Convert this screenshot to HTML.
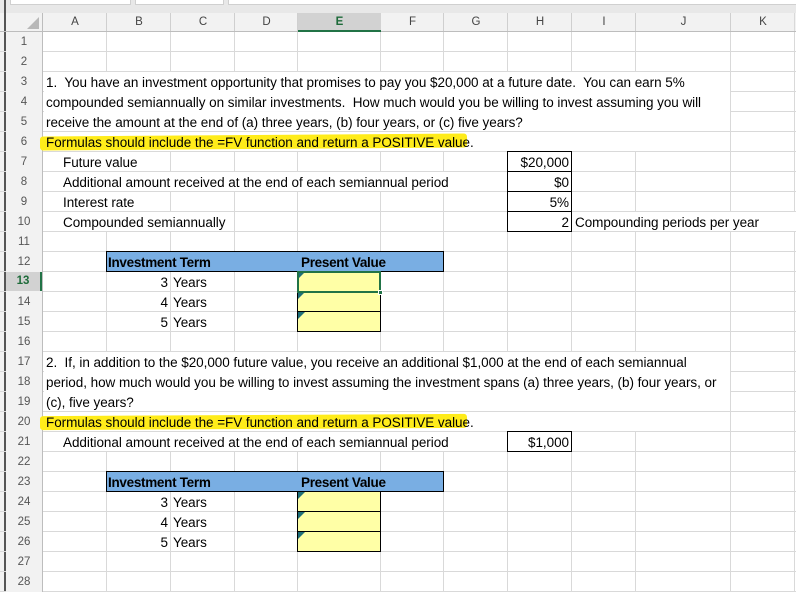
<!DOCTYPE html>
<html><head><meta charset="utf-8"><style>
*{margin:0;padding:0;box-sizing:border-box}
body{width:796px;height:592px;overflow:hidden;background:#fff;position:relative;font-family:"Liberation Sans",Arial,sans-serif;color:#000}
.a{position:absolute}
.t{position:absolute;font-size:13.5px;letter-spacing:-0.05px;white-space:nowrap;line-height:20px;padding-top:1px}
.rh{position:absolute;left:6px;width:36px;text-align:center;font-size:11.5px;color:#555;line-height:20px}
.ch{position:absolute;top:13px;height:19px;text-align:center;font-size:11.5px;color:#444;line-height:19px}
.w{position:absolute;background:#fff}
.y{position:absolute;background:#ffffa6;border:1px solid #000}
.y::before{content:"";position:absolute;left:0;top:0;border-top:7px solid #1f6f78;border-right:7px solid transparent}
.hl{position:absolute;background:#ffec1a;border-radius:3px}
.b{font-weight:bold;letter-spacing:-0.3px}
</style></head><body>
<div class="a" style="left:0;top:0;width:796px;height:13px;background:#e8e8e8"></div>
<div class="a" style="left:10px;top:-1px;width:121px;height:6px;background:#fff;border:1px solid #d0d0d0"></div>
<div class="a" style="left:135px;top:-1px;width:89px;height:6px;background:#fff;border:1px solid #d0d0d0"></div>
<div class="a" style="left:228px;top:-1px;width:570px;height:6px;background:#fff;border:1px solid #d0d0d0"></div>
<div class="a" style="left:0;top:13px;width:796px;height:19px;background:#f2f2f2;border-bottom:1px solid #bdbdbd"></div>
<div class="a" style="left:0;top:13px;width:43px;height:579px;background:#f2f2f2;border-right:1px solid #bdbdbd"></div>
<div class="a" style="left:4px;top:0;width:2px;height:592px;background:#555"></div>
<svg class="a" style="left:26px;top:17px" width="14" height="13"><polygon points="13,0 13,12 1,12" fill="#b8b8b8"/></svg>
<svg class="a" style="left:0;top:0" width="796" height="592">
<g stroke="#d9d9d9" stroke-width="1">
<line x1="106.5" y1="13" x2="106.5" y2="592"/><line x1="170.5" y1="13" x2="170.5" y2="592"/><line x1="234.5" y1="13" x2="234.5" y2="592"/><line x1="297.5" y1="13" x2="297.5" y2="592"/><line x1="380.5" y1="13" x2="380.5" y2="592"/><line x1="443.5" y1="13" x2="443.5" y2="592"/><line x1="507.5" y1="13" x2="507.5" y2="592"/><line x1="571.5" y1="13" x2="571.5" y2="592"/><line x1="635.5" y1="13" x2="635.5" y2="592"/><line x1="730.5" y1="13" x2="730.5" y2="592"/><line x1="794.5" y1="13" x2="794.5" y2="592"/>
</g>
<g stroke="#d9d9d9">
<line x1="0" y1="51.5" x2="796" y2="51.5"/><line x1="0" y1="71.5" x2="796" y2="71.5"/><line x1="0" y1="91.5" x2="796" y2="91.5"/><line x1="0" y1="111.5" x2="796" y2="111.5"/><line x1="0" y1="131.5" x2="796" y2="131.5"/><line x1="0" y1="151.5" x2="796" y2="151.5"/><line x1="0" y1="171.5" x2="796" y2="171.5"/><line x1="0" y1="191.5" x2="796" y2="191.5"/><line x1="0" y1="211.5" x2="796" y2="211.5"/><line x1="0" y1="231.5" x2="796" y2="231.5"/><line x1="0" y1="251.5" x2="796" y2="251.5"/><line x1="0" y1="271.5" x2="796" y2="271.5"/><line x1="0" y1="291.5" x2="796" y2="291.5"/><line x1="0" y1="311.5" x2="796" y2="311.5"/><line x1="0" y1="331.5" x2="796" y2="331.5"/><line x1="0" y1="351.5" x2="796" y2="351.5"/><line x1="0" y1="371.5" x2="796" y2="371.5"/><line x1="0" y1="391.5" x2="796" y2="391.5"/><line x1="0" y1="411.5" x2="796" y2="411.5"/><line x1="0" y1="431.5" x2="796" y2="431.5"/><line x1="0" y1="451.5" x2="796" y2="451.5"/><line x1="0" y1="471.5" x2="796" y2="471.5"/><line x1="0" y1="491.5" x2="796" y2="491.5"/><line x1="0" y1="511.5" x2="796" y2="511.5"/><line x1="0" y1="531.5" x2="796" y2="531.5"/><line x1="0" y1="551.5" x2="796" y2="551.5"/><line x1="0" y1="571.5" x2="796" y2="571.5"/><line x1="0" y1="591.5" x2="796" y2="591.5"/>
</g>
<g stroke="#cfcfcf"><line x1="106.5" y1="13" x2="106.5" y2="31"/><line x1="170.5" y1="13" x2="170.5" y2="31"/><line x1="234.5" y1="13" x2="234.5" y2="31"/><line x1="297.5" y1="13" x2="297.5" y2="31"/><line x1="380.5" y1="13" x2="380.5" y2="31"/><line x1="443.5" y1="13" x2="443.5" y2="31"/><line x1="507.5" y1="13" x2="507.5" y2="31"/><line x1="571.5" y1="13" x2="571.5" y2="31"/><line x1="635.5" y1="13" x2="635.5" y2="31"/><line x1="730.5" y1="13" x2="730.5" y2="31"/></g>
</svg>
<div class="a" style="left:6px;top:32px;width:36px;height:560px;background:#f2f2f2"></div>
<div class="a" style="left:42px;top:32px;width:1px;height:560px;background:#bdbdbd"></div>
<div class="a" style="left:0;top:31px;width:796px;height:1px;background:#bdbdbd"></div>
<div class="ch" style="left:43px;width:64px">A</div><div class="ch" style="left:107px;width:64px">B</div><div class="ch" style="left:171px;width:64px">C</div><div class="ch" style="left:235px;width:63px">D</div>
<div class="ch" style="left:298px;width:83px;background:#d2d2d2;font-weight:bold;color:#1e6b3a;border-bottom:2px solid #217346">E</div>
<div class="ch" style="left:381px;width:63px">F</div><div class="ch" style="left:444px;width:64px">G</div><div class="ch" style="left:508px;width:64px">H</div><div class="ch" style="left:572px;width:64px">I</div><div class="ch" style="left:636px;width:95px">J</div><div class="ch" style="left:731px;width:64px">K</div>
<div class="rh" style="top:32px">1</div><div class="rh" style="top:52px">2</div><div class="rh" style="top:72px">3</div><div class="rh" style="top:92px">4</div><div class="rh" style="top:112px">5</div><div class="rh" style="top:132px">6</div><div class="rh" style="top:152px">7</div><div class="rh" style="top:172px">8</div><div class="rh" style="top:192px">9</div><div class="rh" style="top:212px">10</div><div class="rh" style="top:232px">11</div><div class="rh" style="top:252px">12</div>
<div class="rh" style="top:272px;background:#d2d2d2;color:#1e6b3a;font-weight:bold;border-right:2px solid #217346;height:19px;line-height:19px">13</div>
<div class="rh" style="top:292px">14</div><div class="rh" style="top:312px">15</div><div class="rh" style="top:332px">16</div><div class="rh" style="top:352px">17</div><div class="rh" style="top:372px">18</div><div class="rh" style="top:392px">19</div><div class="rh" style="top:412px">20</div><div class="rh" style="top:432px">21</div><div class="rh" style="top:452px">22</div><div class="rh" style="top:472px">23</div><div class="rh" style="top:492px">24</div><div class="rh" style="top:512px">25</div><div class="rh" style="top:532px">26</div><div class="rh" style="top:552px">27</div><div class="rh" style="top:572px">28</div>
<div class="w" style="left:44px;top:72px;width:686px;height:59px"></div>
<div class="w" style="left:44px;top:132px;width:686px;height:19px"></div>
<div class="w" style="left:44px;top:152px;width:126px;height:19px"></div>
<div class="w" style="left:44px;top:172px;width:463px;height:19px"></div>
<div class="w" style="left:44px;top:192px;width:126px;height:19px"></div>
<div class="w" style="left:44px;top:212px;width:190px;height:19px"></div>
<div class="w" style="left:573px;top:212px;width:222px;height:19px"></div>
<div class="w" style="left:44px;top:352px;width:686px;height:59px"></div>
<div class="w" style="left:44px;top:412px;width:686px;height:19px"></div>
<div class="w" style="left:44px;top:432px;width:463px;height:19px"></div>
<div class="hl" style="left:40px;top:135px;width:427px;height:14px;transform:rotate(-0.4deg)"></div>
<div class="hl" style="left:40px;top:415px;width:427px;height:14px;transform:rotate(-0.3deg)"></div>
<div class="t" style="left:46px;top:72px">1.&nbsp; You have an investment opportunity that promises to pay you $20,000 at a future date.&nbsp; You can earn 5%</div>
<div class="t" style="left:46px;top:92px">compounded semiannually on similar investments.&nbsp; How much would you be willing to invest assuming you will</div>
<div class="t" style="left:46px;top:112px">receive the amount at the end of (a) three years, (b) four years, or (c) five years?</div>
<div class="t" style="left:46px;top:132px">Formulas should include the =FV function and return a POSITIVE value.</div>
<div class="t" style="left:63px;top:152px">Future value</div>
<div class="t" style="left:63px;top:172px">Additional amount received at the end of each semiannual period</div>
<div class="t" style="left:63px;top:192px">Interest rate</div>
<div class="t" style="left:63px;top:212px">Compounded semiannually</div>
<div class="a" style="left:507px;top:151px;width:65px;height:81px;border:1px solid #000;background:#fff"></div>
<div class="a" style="left:507px;top:171px;width:65px;height:1px;background:#000"></div>
<div class="a" style="left:507px;top:191px;width:65px;height:1px;background:#000"></div>
<div class="a" style="left:507px;top:211px;width:65px;height:1px;background:#000"></div>
<div class="t" style="left:508px;top:152px;width:61px;text-align:right">$20,000</div>
<div class="t" style="left:508px;top:172px;width:61px;text-align:right">$0</div>
<div class="t" style="left:508px;top:192px;width:61px;text-align:right">5%</div>
<div class="t" style="left:508px;top:212px;width:61px;text-align:right">2</div>
<div class="t" style="left:575px;top:212px">Compounding periods per year</div>
<div class="a" style="left:106px;top:251px;width:338px;height:21px;background:#79aee3;border:1px solid #000"></div>
<div class="t b" style="left:108px;top:252px">Investment Term</div>
<div class="t b" style="left:301px;top:252px">Present Value</div>
<div class="t" style="left:107px;top:272px;width:61px;text-align:right">3</div><div class="t" style="left:173px;top:272px">Years</div>
<div class="t" style="left:107px;top:292px;width:61px;text-align:right">4</div><div class="t" style="left:173px;top:292px">Years</div>
<div class="t" style="left:107px;top:312px;width:61px;text-align:right">5</div><div class="t" style="left:173px;top:312px">Years</div>
<div class="y" style="left:297px;top:271px;width:84px;height:21px"></div>
<div class="y" style="left:297px;top:291px;width:84px;height:21px"></div>
<div class="y" style="left:297px;top:311px;width:84px;height:21px"></div>
<div class="a" style="left:297px;top:271px;width:84px;height:22px;border:2px solid #217346"></div>
<div class="a" style="left:378px;top:290px;width:5px;height:5px;background:#217346;border:1px solid #fff"></div>
<div class="t" style="left:46px;top:352px">2.&nbsp; If, in addition to the $20,000 future value, you receive an additional $1,000 at the end of each semiannual</div>
<div class="t" style="left:46px;top:372px">period, how much would you be willing to invest assuming the investment spans (a) three years, (b) four years, or</div>
<div class="t" style="left:46px;top:392px">(c), five years?</div>
<div class="t" style="left:46px;top:412px">Formulas should include the =FV function and return a POSITIVE value.</div>
<div class="t" style="left:63px;top:432px">Additional amount received at the end of each semiannual period</div>
<div class="a" style="left:507px;top:431px;width:65px;height:21px;border:1px solid #000;background:#fff"></div>
<div class="t" style="left:508px;top:432px;width:61px;text-align:right">$1,000</div>
<div class="a" style="left:106px;top:471px;width:338px;height:21px;background:#79aee3;border:1px solid #000"></div>
<div class="t b" style="left:108px;top:472px">Investment Term</div>
<div class="t b" style="left:301px;top:472px">Present Value</div>
<div class="t" style="left:107px;top:492px;width:61px;text-align:right">3</div><div class="t" style="left:173px;top:492px">Years</div>
<div class="t" style="left:107px;top:512px;width:61px;text-align:right">4</div><div class="t" style="left:173px;top:512px">Years</div>
<div class="t" style="left:107px;top:532px;width:61px;text-align:right">5</div><div class="t" style="left:173px;top:532px">Years</div>
<div class="y" style="left:297px;top:491px;width:84px;height:21px"></div>
<div class="y" style="left:297px;top:511px;width:84px;height:21px"></div>
<div class="y" style="left:297px;top:531px;width:84px;height:21px"></div>
</body></html>
